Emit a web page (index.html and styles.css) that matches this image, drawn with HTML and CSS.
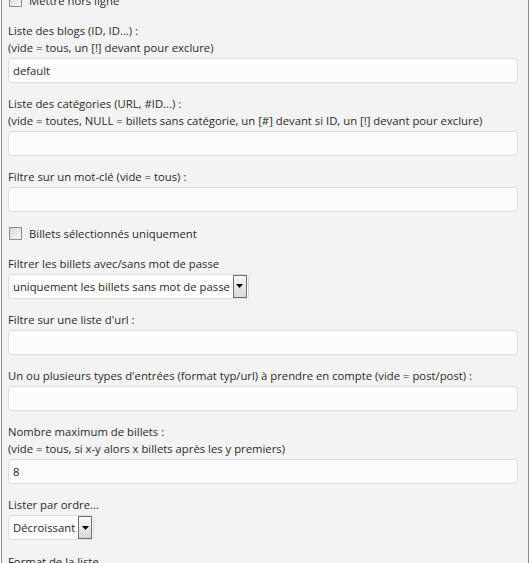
FILE: index.html
```html
<!DOCTYPE html>
<html>
<head>
    <title>Options du widget</title>
    <link rel="stylesheet" href="styles.css">
</head>
<body>
    <div class="panel">
        <p class="check"><span class="box"></span>Mettre hors ligne</p>

        <div class="field">
            <label>Liste des blogs (ID, ID...) :<br>(vide = tous, un [!] devant pour exclure)</label>
            <div class="input">default</div>
        </div>

        <div class="field">
            <label>Liste des catégories (URL, #ID...) :<br>(vide = toutes, NULL = billets sans catégorie, un [#] devant si ID, un [!] devant pour exclure)</label>
            <div class="input"></div>
        </div>

        <div class="field">
            <label>Filtre sur un mot-clé (vide = tous) :</label>
            <div class="input"></div>
        </div>

        <p class="check"><span class="box"></span>Billets sélectionnés uniquement</p>

        <div class="field">
            <label>Filtrer les billets avec/sans mot de passe</label>
            <div class="select">
                <span class="value">uniquement les billets sans mot de passe</span>
                <span class="arrow"><svg width="7" height="4" viewBox="0 0 7 4"><path d="M0 0H7L3.5 4Z" fill="#000"/></svg></span>
            </div>
        </div>

        <div class="field">
            <label>Filtre sur une liste d'url :</label>
            <div class="input"></div>
        </div>

        <div class="field">
            <label>Un ou plusieurs types d'entrées (format typ/url) à prendre en compte (vide = post/post) :</label>
            <div class="input"></div>
        </div>

        <div class="field">
            <label>Nombre maximum de billets :<br>(vide = tous, si x-y alors x billets après les y premiers)</label>
            <div class="input">8</div>
        </div>

        <div class="field">
            <label>Lister par ordre...</label>
            <div class="select">
                <span class="value">Décroissant</span>
                <span class="arrow"><svg width="7" height="4" viewBox="0 0 7 4"><path d="M0 0H7L3.5 4Z" fill="#000"/></svg></span>
            </div>
        </div>

        <div class="field">
            <label>Format de la liste</label>
        </div>
    </div>
</body>
</html>
```

FILE: styles.css
```css
body {
    margin: 0;
    background: #fff;
    font-family: "Open Sans", "Noto Sans", sans-serif;
    font-size: 11.3px;
    color: #2a2a2a;
    overflow: hidden;
}
.panel {
    width: 528px;
    height: 600px;
    margin: -8px 0 0 1px;
    padding: 0 6px;
    box-sizing: border-box;
    background: #f3f3f3;
    border-left: 1px solid #8c8c8c;
    border-right: 1px solid #8c8c8c;
}
.check {
    display: flex;
    align-items: center;
    gap: 7px;
    margin: 0 0 13px;
    line-height: 17px;
}
.box {
    width: 11px;
    height: 11px;
    border: 1px solid #8e8f8f;
    background: linear-gradient(135deg, #d6d6d6, #f8f8f8);
    margin-left: 1px;
}
.field {
    margin-bottom: 12.2px;
}
label {
    display: block;
    line-height: 17px;
    margin-bottom: 2px;
}
.input {
    height: 25px;
    width: 510px;
    border: 1px solid #dedede;
    border-radius: 3px;
    background: #fcfcfc;
    padding: 0 4px;
    line-height: 23px;
    box-sizing: border-box;
}
.select {
    display: inline-flex;
    align-items: center;
    height: 25px;
    padding-left: 4px;
    border: 1px solid #dedede;
    border-radius: 3px;
    background: #fcfcfc;
    box-sizing: border-box;
    gap: 3px;
}
.arrow {
    width: 12px;
    height: 21px;
    border: 1px solid #6f6f6f;
    background: linear-gradient(#f8f8f8, #d8d8d8);
    display: flex;
    align-items: center;
    justify-content: center;
    margin-right: 1px;
}
```
